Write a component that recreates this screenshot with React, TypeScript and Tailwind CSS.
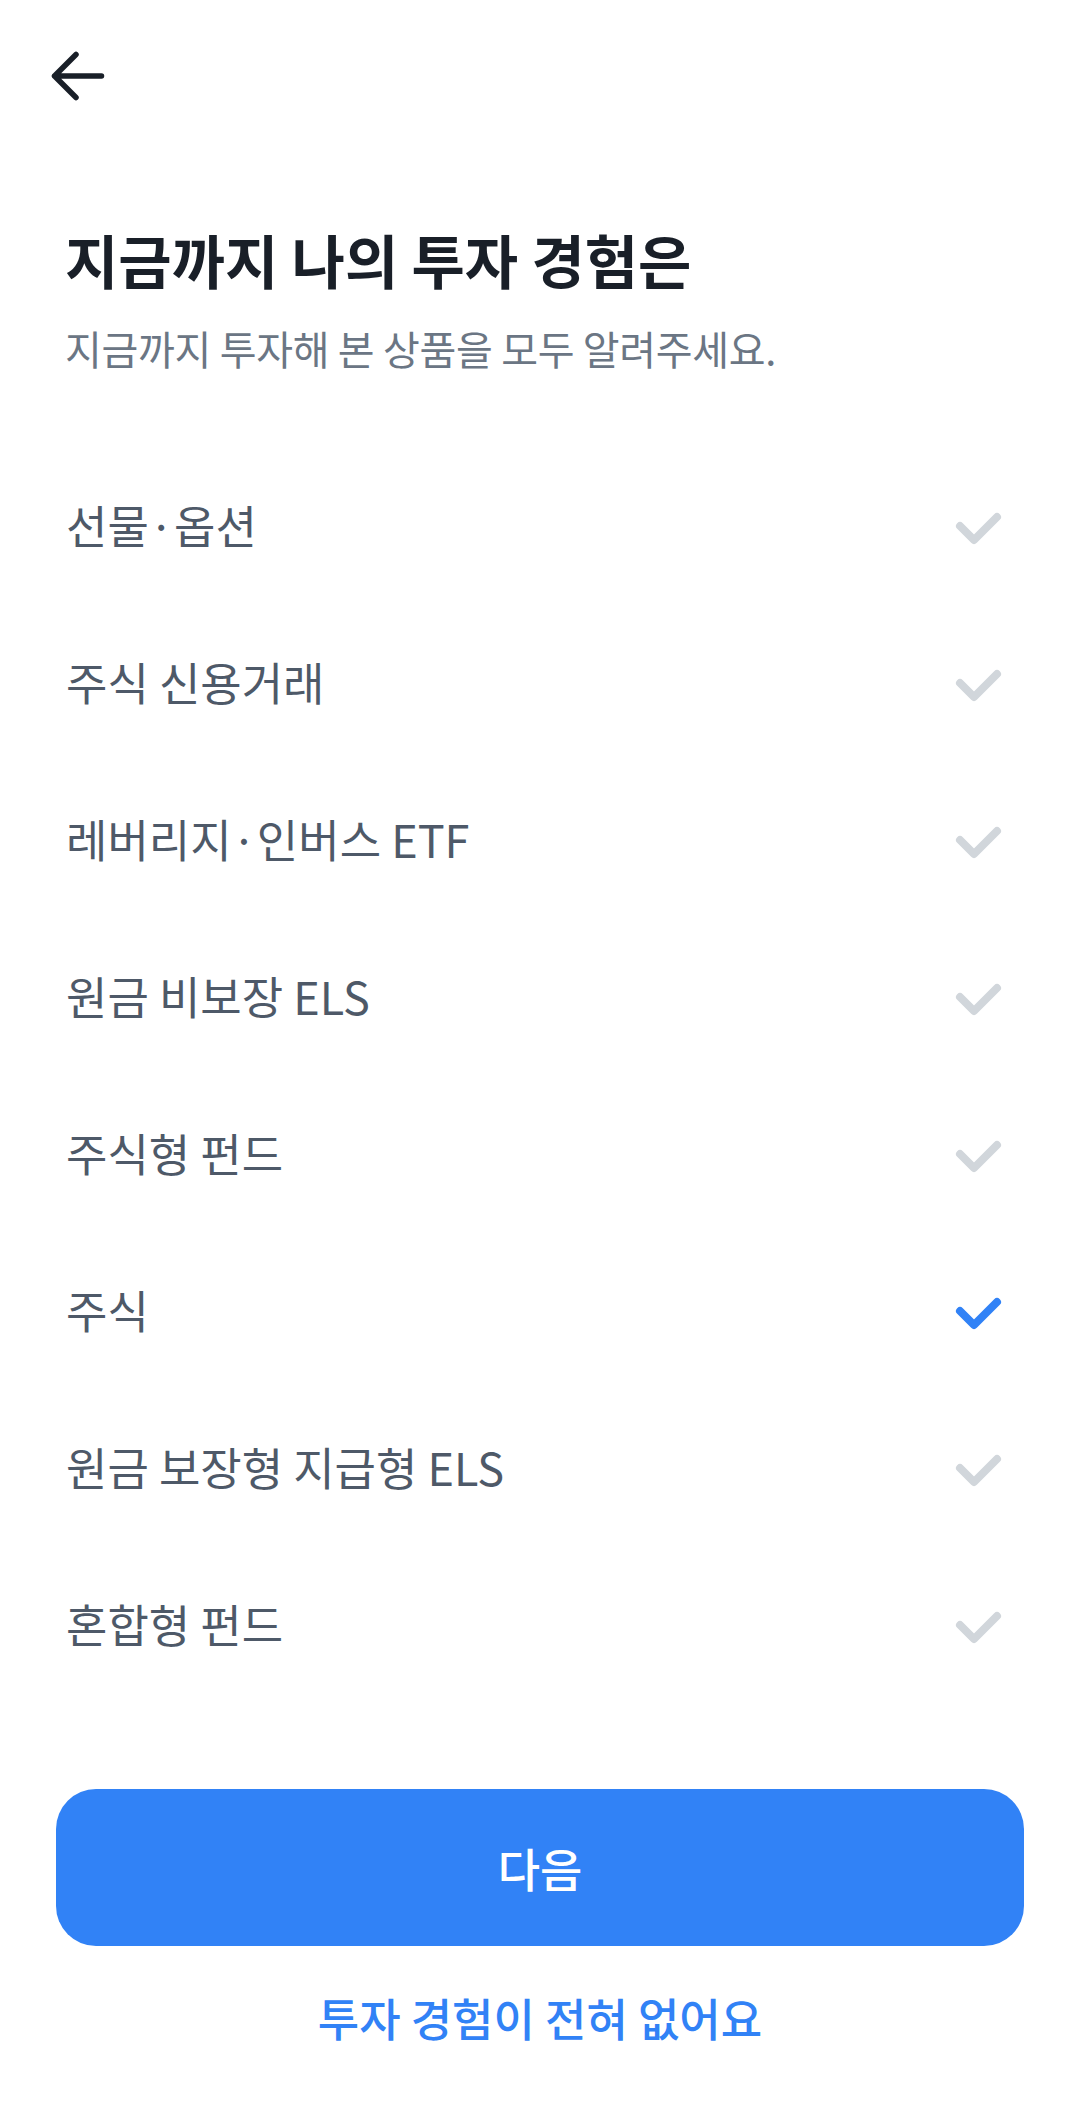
import { useState } from 'react'

const ITEMS = [
  '선물·옵션',
  '주식 신용거래',
  '레버리지·인버스 ETF',
  '원금 비보장 ELS',
  '주식형 펀드',
  '주식',
  '원금 보장형 지급형 ELS',
  '혼합형 펀드',
]

export default function App() {
  const [selected, setSelected] = useState<string[]>(['주식'])

  const toggle = (name: string) =>
    setSelected(prev => (prev.includes(name) ? prev.filter(n => n !== name) : [...prev, name]))

  return (
    <div className="min-h-screen w-full bg-white font-['Noto_Sans_CJK_KR','Noto_Sans',sans-serif]">
      {/* Top bar */}
      <div className="flex h-[152px] items-center pl-[48px]">
        <button className="flex items-center justify-center">
          <svg width="60" height="56" viewBox="0 0 60 56" fill="none">
            <path
              d="M28 6.5L6.5 28L28 49.5M6.5 28H53.5"
              stroke="#191f28"
              strokeWidth="5.5"
              strokeLinecap="round"
              strokeLinejoin="round"
            />
          </svg>
        </button>
      </div>

      {/* Heading */}
      <div className="px-[65px]">
        <h1 className="mt-[72px] text-[58px] leading-[70px] font-bold text-[#191f28]">
          지금까지 나의 투자 경험은
        </h1>
        <p className="mt-[28px] text-[40px] leading-[52px] tracking-[-0.3px] text-[#6b7684]">
          지금까지 투자해 본 상품을 모두 알려주세요.
        </p>
      </div>

      {/* Options */}
      <ul className="mt-[72px]">
        {ITEMS.map(name => (
          <OptionRow key={name} name={name} checked={selected.includes(name)} onClick={() => toggle(name)} />
        ))}
      </ul>

      {/* Actions */}
      <div className="mt-[87px] px-[56px]">
        <button className="flex h-[157px] w-full items-center justify-center rounded-[40px] bg-[#3182f6] text-[46px] font-medium text-white">
          다음
        </button>
      </div>
      <div className="mt-[42px] flex justify-center">
        <button className="text-[45px] leading-[60px] font-medium text-[#3182f6]">투자 경험이 전혀 없어요</button>
      </div>
    </div>
  )
}

function OptionRow({ name, checked, onClick }: { name: string; checked: boolean; onClick: () => void }) {
  return (
    <li
      onClick={onClick}
      className="flex h-[157px] cursor-pointer items-center justify-between pl-[66px] pr-[78px]"
    >
      <span className="text-[45px] text-[#4e5968]">{name}</span>
      <svg width="48" height="40" viewBox="0 0 48 40" fill="none">
        <path
          d="M6 21L20 35L43 12"
          stroke={checked ? '#3182f6' : '#d1d6db'}
          strokeWidth="8"
          strokeLinecap="round"
          strokeLinejoin="round"
        />
      </svg>
    </li>
  )
}
